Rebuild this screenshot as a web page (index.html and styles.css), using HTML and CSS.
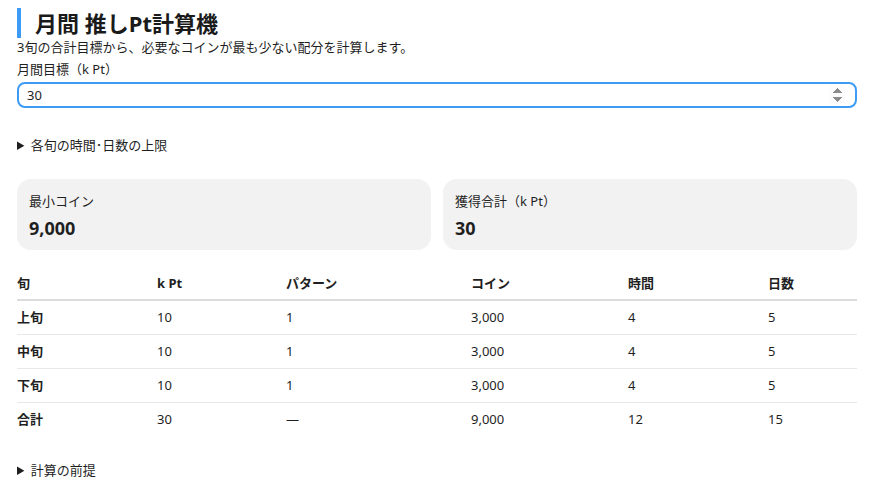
FILE: index.html
```html
<!DOCTYPE html>
<html lang="ja">
<head>
<meta charset="utf-8">
<link rel="stylesheet" href="styles.css">
</head>
<body>
<main class="app">
  <h1 class="title">月間 推しPt計算機</h1>
  <p class="lead">3旬の合計目標から、必要なコインが最も少ない配分を計算します。</p>
  <label class="field-label" for="target">月間目標（k Pt）</label>
  <input class="target" id="target" type="number" value="30" autofocus>
  <details class="disclosure limits">
    <summary>各旬の時間･日数の上限</summary>
  </details>
  <section class="cards">
    <div class="card">
      <div class="card-label">最小コイン</div>
      <div class="card-value">9,000</div>
    </div>
    <div class="card">
      <div class="card-label">獲得合計（k Pt）</div>
      <div class="card-value">30</div>
    </div>
  </section>
  <table class="result">
    <colgroup>
      <col class="c1"><col class="c2"><col class="c3"><col class="c4"><col class="c5"><col class="c6">
    </colgroup>
    <thead>
      <tr><th>旬</th><th>k Pt</th><th>パターン</th><th>コイン</th><th>時間</th><th>日数</th></tr>
    </thead>
    <tbody>
      <tr><th>上旬</th><td>10</td><td>1</td><td>3,000</td><td>4</td><td>5</td></tr>
      <tr><th>中旬</th><td>10</td><td>1</td><td>3,000</td><td>4</td><td>5</td></tr>
      <tr><th>下旬</th><td>10</td><td>1</td><td>3,000</td><td>4</td><td>5</td></tr>
      <tr class="total"><th>合計</th><td>30</td><td>—</td><td>9,000</td><td>12</td><td>15</td></tr>
    </tbody>
  </table>
  <details class="disclosure notes">
    <summary>計算の前提</summary>
  </details>
</main>
</body>
</html>
```

FILE: styles.css
```css
* { box-sizing: border-box; }
html, body { margin: 0; padding: 0; background: #fff; }
body {
  font-family: "Noto Sans", "Noto Sans CJK JP", sans-serif;
  color: #1f1f1f;
  font-size: 13px;
}
.app {
  width: 840px;
  margin: 0 0 0 17px;
  padding-top: 8px;
}
.title {
  margin: 0;
  font-size: 22px;
  line-height: 30px;
  font-weight: 700;
  border-left: 4px solid #3d9bf5;
  padding-left: 14px;
  color: #1a1a1a;
}
.lead {
  margin: 0;
  line-height: 18px;
}
.field-label {
  display: block;
  margin-top: 4px;
  line-height: 18px;
}
.target {
  display: block;
  width: 100%;
  height: 26px;
  margin-top: 4px;
  border: 2px solid #3d9bf5;
  border-radius: 8px;
  padding: 0 10px 0 8px;
  font: inherit;
  font-size: 13px;
  color: #1f1f1f;
  outline: none;
}
.disclosure summary {
  line-height: 18px;
  cursor: pointer;
}
.limits { margin-top: 28px; }
.cards {
  display: grid;
  grid-template-columns: 1fr 1fr;
  gap: 12px;
  margin-top: 25px;
}
.card {
  background: #f2f2f2;
  border-radius: 14px;
  height: 71px;
  padding: 13px 12px 0;
}
.card-label { line-height: 18px; }
.card-value {
  margin-top: 6px;
  font-size: 18px;
  font-weight: 700;
  line-height: 24px;
}
.result {
  width: 100%;
  margin-top: 16px;
  border-collapse: collapse;
  table-layout: fixed;
}
.c1 { width: 140px; }
.c2 { width: 129px; }
.c3 { width: 185px; }
.c4 { width: 157px; }
.c5 { width: 140px; }
.c6 { width: 89px; }
.result th, .result td {
  text-align: left;
  padding: 0;
  height: 34px;
  line-height: 18px;
  vertical-align: middle;
}
.result th { font-weight: 700; }
.result thead th { border-bottom: 2px solid #dcdcdc; }
.result tbody tr { border-bottom: 1px solid #e8e8e8; }
.result tbody tr.total { border-bottom: none; }
.result td { font-weight: 400; }
.notes { margin-top: 25px; }
```
